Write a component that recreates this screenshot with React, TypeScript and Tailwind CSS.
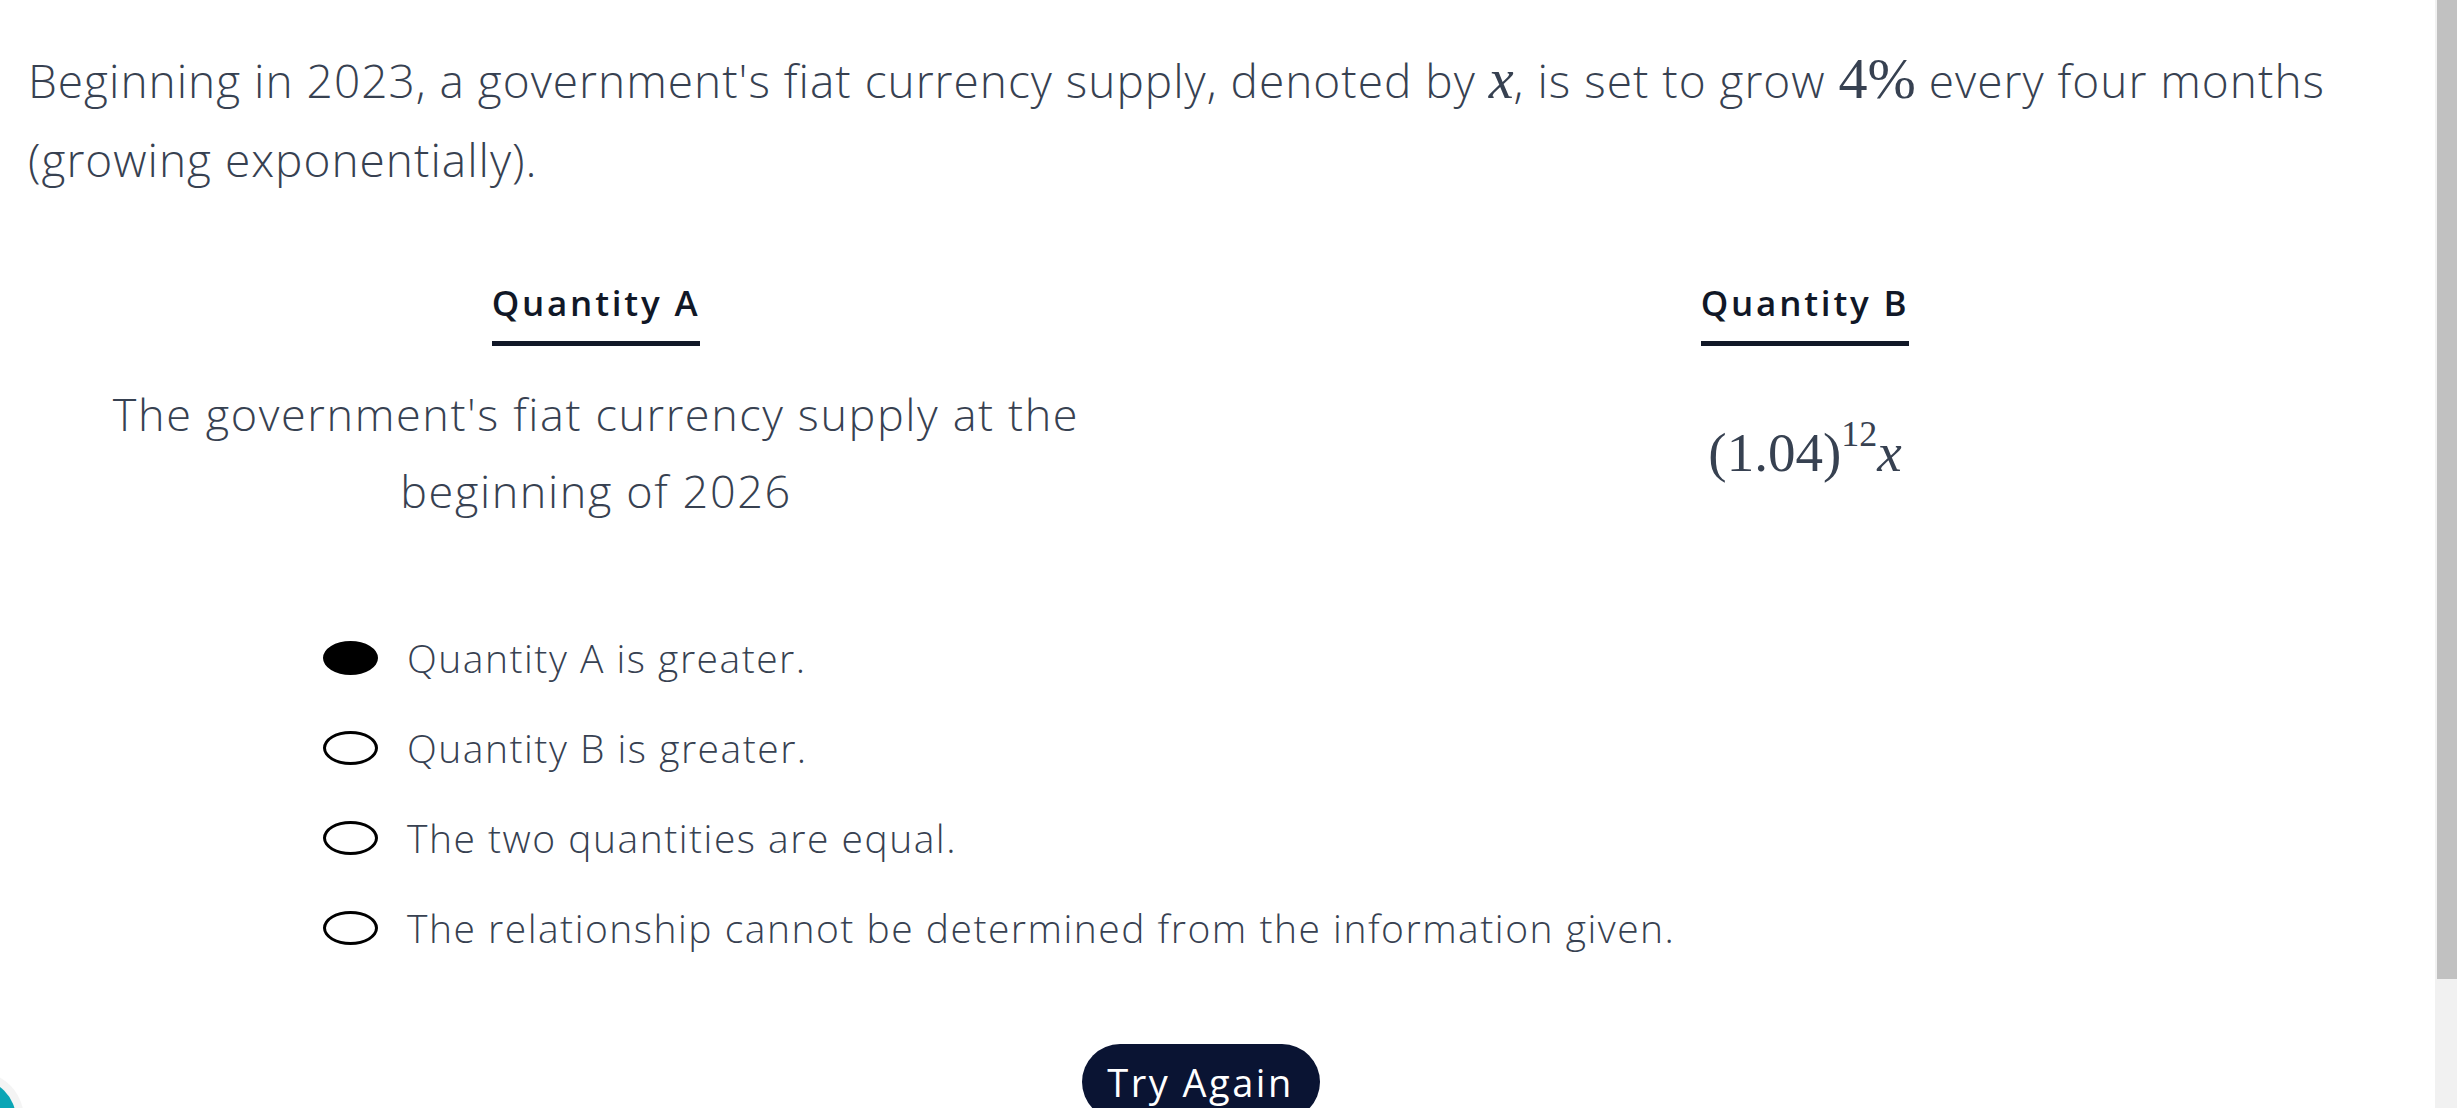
import React from 'react';

const options = [
  'Quantity A is greater.',
  'Quantity B is greater.',
  'The two quantities are equal.',
  'The relationship cannot be determined from the information given.',
];

const Math: React.FC<{ children: React.ReactNode; className?: string }> = ({ children, className }) => (
  <span className={`font-['Liberation_Serif',serif] leading-none tracking-normal ${className ?? ''}`}>{children}</span>
);

export default function App() {
  const selected = 0;

  return (
    <div className="flex h-[1108px] w-full overflow-hidden bg-white font-['Open_Sans',sans-serif] font-light">
      <main className="relative flex-1 pl-[28px] pr-[62px] pt-[41px]">
        {/* question stem */}
        <p className="whitespace-nowrap text-[46px] leading-[79px] tracking-[1px] text-[#374151]">
          Beginning in 2023, a government's fiat currency supply, denoted by{' '}
          <Math className="text-[56px] italic">x</Math>, is set to grow{' '}
          <Math className="text-[58px]">4%</Math> every four months
          <br />
          (growing exponentially).
        </p>

        {/* quantities */}
        <div className="mt-[84px] grid grid-cols-2 gap-x-[73px]">
          <div className="flex justify-center">
            <h3 className="border-b-[5px] border-[#111827] pb-[18px] text-[35px] font-semibold leading-[40px] tracking-[2.8px] text-[#111827]">
              Quantity A
            </h3>
          </div>
          <div className="flex justify-center">
            <h3 className="border-b-[5px] border-[#111827] pb-[18px] text-[35px] font-semibold leading-[40px] tracking-[2.8px] text-[#111827]">
              Quantity B
            </h3>
          </div>
          <div className="mt-[29px] flex justify-center">
            <p className="whitespace-nowrap text-center text-[45px] leading-[77px] tracking-[1.6px] text-[#374151]">
              The government's fiat currency supply at the
              <br />
              beginning of 2026
            </p>
          </div>
          <div className="mt-[29px] flex items-center justify-center text-[#374151]">
            <Math className="text-[55px]">
              (1.04)
              <sup className="relative -top-[25px] text-[36px]">12</sup>
              <span className="italic">x</span>
            </Math>
          </div>
        </div>

        {/* answer choices */}
        <ul className="mt-[105px] flex flex-col gap-[42px] pl-[295px]">
          {options.map((opt, i) => (
            <li key={opt} className="flex h-[48px] items-center gap-[29px]">
              <span
                className={`h-[34px] w-[55px] shrink-0 rounded-[50%] border-[3px] border-black ${
                  i === selected ? 'bg-black' : 'bg-white'
                }`}
              />
              <span className="whitespace-nowrap text-[39px] leading-[48px] tracking-[1.5px] text-[#374151]">
                {opt}
              </span>
            </li>
          ))}
        </ul>

        <div className="mt-[92px] flex justify-center">
          <button className="w-[238px] rounded-full bg-[#0a1433] py-[14px] text-[38px] font-normal leading-[48px] tracking-[2.5px] text-white">
            Try Again
          </button>
        </div>

        {/* floating help bubble, mostly off screen */}
        <div className="absolute left-[-64px] top-[1079px] h-[80px] w-[80px] rounded-full bg-[#0aa5b5] shadow-[0_0_0_8px_rgba(240,240,240,0.7)]" />
      </main>

      {/* browser scrollbar */}
      <div className="w-[22px] shrink-0 bg-[#f1f1f1] pl-[2px]">
        <div className="h-[979px] bg-[#c1c1c1]" />
      </div>
    </div>
  );
}
